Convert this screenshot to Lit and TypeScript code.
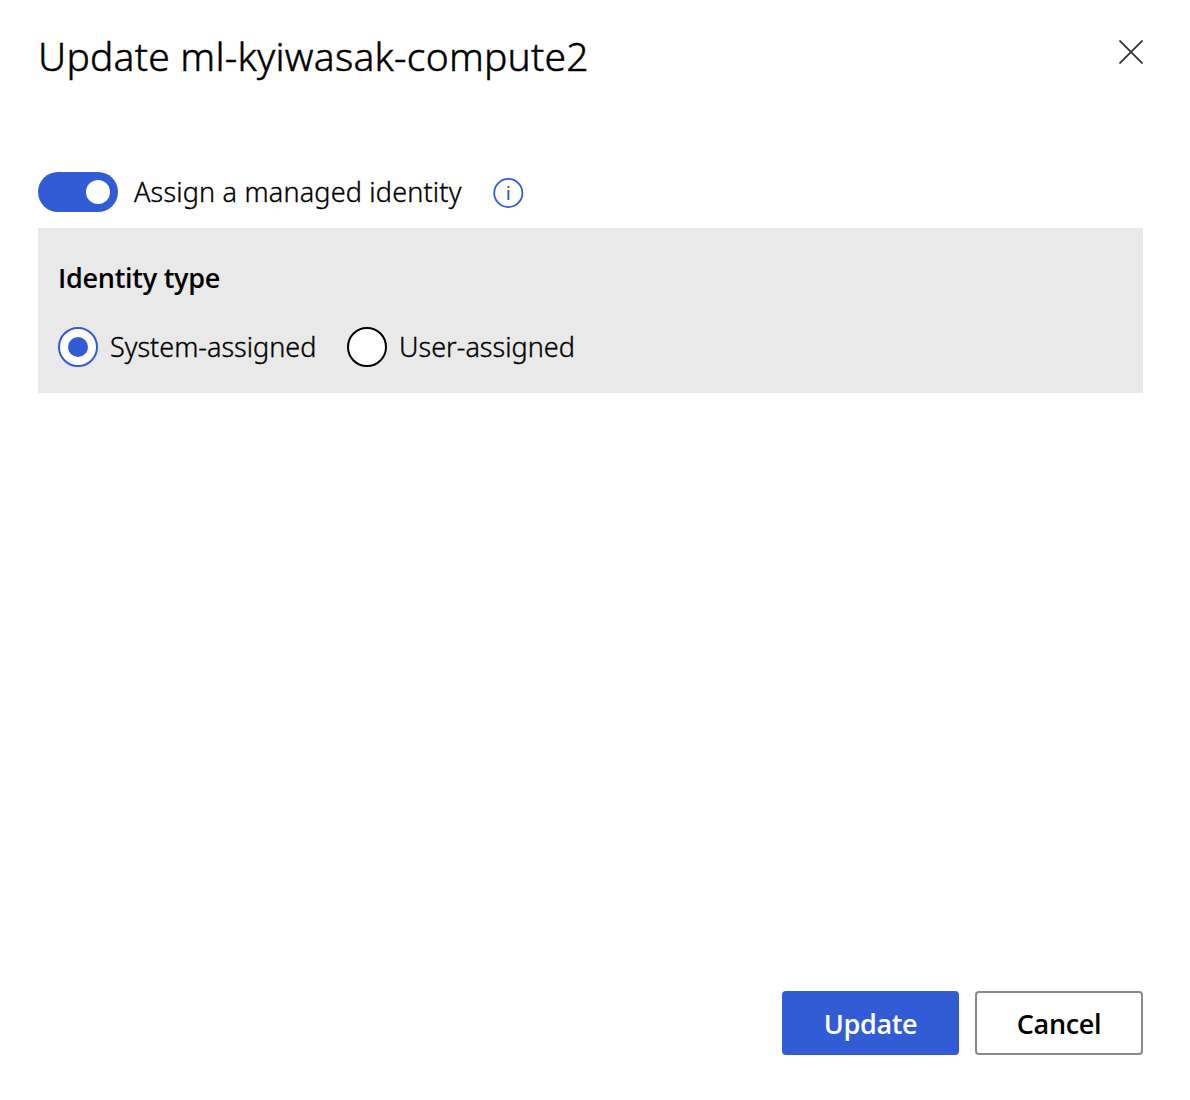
import { LitElement, html, css } from "lit";
import { customElement, state } from "lit/decorators.js";

@customElement("app-root")
class AppRoot extends LitElement {
  @state() private identity = "system";

  static styles = css`
    :host { display: block; }
    * { box-sizing: border-box; }
    .panel { width: 1190px; height: 1100px; padding: 34px 47px 45px 38px; background: #fff; color: #000; display: flex; flex-direction: column; font-family: "Noto Sans", "Open Sans", sans-serif; font-size: 27px; font-weight: 300; line-height: 40px; }
    .header { display: flex; justify-content: space-between; height: 138px; }
    .title { margin: 0; font-size: 39px; line-height: 44px; font-weight: 300; letter-spacing: 0.23px; -webkit-text-stroke: 0.5px #000; white-space: nowrap; }
    .close { width: 24px; height: 24px; margin-top: 6px; padding: 0; border: 0; background: none; display: block; }
    svg { display: block; }
    .assign { display: flex; align-items: center; height: 40px; }
    .toggle { width: 80px; height: 40px; padding: 8px; border: 0; border-radius: 20px; background: #315cd5; display: flex; justify-content: flex-end; }
    .knob { width: 24px; height: 24px; border-radius: 50%; background: #fff; }
    .assign-label { width: 327px; margin: 0 32px 0 16px; letter-spacing: 0.18px; -webkit-text-stroke: 0.35px #000; white-space: nowrap; }
    .info { margin-top: 2px; }
    .identity { margin-top: 16px; height: 165px; padding: 30px 20px; background: #e9e9e9; }
    .legend { font-family: "Open Sans", sans-serif; font-weight: 600; letter-spacing: -0.27px; }
    .options { display: flex; margin-top: 29px; }
    .option { display: flex; gap: 12px; width: 289px; -webkit-text-stroke: 0.35px #000; white-space: nowrap; }
    .radio { width: 40px; height: 40px; border: 2px solid #000; border-radius: 50%; background: #fff; display: grid; place-items: center; }
    .radio.on { border-color: #315cd5; }
    .dot { width: 20px; height: 20px; border-radius: 50%; background: #315cd5; }
    .footer { margin-top: auto; display: flex; justify-content: flex-end; gap: 16px; }
    .btn { height: 64px; width: 168px; padding: 0; border: 2px solid #8a8a8a; border-radius: 4px; background: #fff; color: #000; font: 600 27px "Open Sans", sans-serif; letter-spacing: -0.35px; }
    .primary { width: 177px; border-color: #315cd5; background: #315cd5; color: #fff; }
    .t { display: inline-block; white-space: nowrap; }
  `;

  private option(id: string, label: string) {
    const on = this.identity === id;
    return html`<div class="option" @click=${() => (this.identity = id)}>
      <span class="radio ${on ? "on" : ""}">${on ? html`<span class="dot"></span>` : ""}</span><span class="t">${label}</span>
    </div>`;
  }

  render() {
    return html`<div class="panel">
      <header class="header">
        <h1 class="title"><span class="t">Update ml-kyiwasak-compute2</span></h1>
        <button class="close" aria-label="Close"><svg width="24" height="24" viewBox="0 0 24 24"><path d="M.5.5l23 23M23.5.5l-23 23" stroke="#333" stroke-width="1.8" /></svg></button>
      </header>
      <div class="assign">
        <button class="toggle" aria-label="Assign a managed identity"><span class="knob"></span></button>
        <span class="assign-label"><span class="t">Assign a managed identity</span></span>
        <svg class="info" width="31" height="30" viewBox="0 0 31 30"><circle cx="15.3" cy="15" r="14.1" fill="none" stroke="#315cd5" stroke-width="1.8" /><path d="M15.4 12v10M15.4 8v2" stroke="#315cd5" stroke-width="1.9" /></svg>
      </div>
      <section class="identity">
        <div class="legend"><span class="t">Identity type</span></div>
        <div class="options">${this.option("system", "System-assigned")}${this.option("user", "User-assigned")}</div>
      </section>
      <footer class="footer">
        <button class="btn primary"><span class="t">Update</span></button>
        <button class="btn"><span class="t">Cancel</span></button>
      </footer>
    </div>`;
  }
}
